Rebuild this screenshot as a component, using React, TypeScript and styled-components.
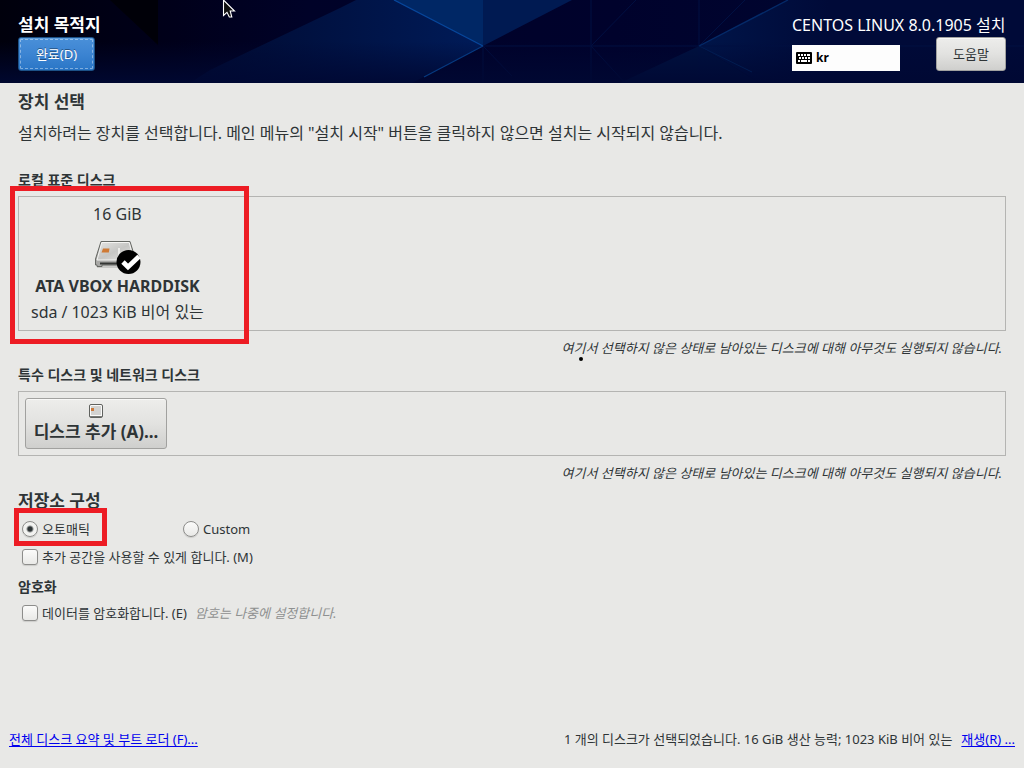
import React from "react";
import styled, { createGlobalStyle, css } from "styled-components";

const GlobalStyle = createGlobalStyle`
  *, *::before, *::after { box-sizing: border-box; }
  body {
    margin: 0;
    background: #e8e8e6;
    color: #2e3436;
    font-family: "Noto Sans", "Noto Sans CJK KR", sans-serif;
    font-size: 13px;
    line-height: 20px;
  }
  button, input { font: inherit; color: inherit; }
  h1, h2, h3, p { margin: 0; }
`;

const Page = styled.div`
  min-height: 100vh;
  display: flex;
  flex-direction: column;
`;

const Header = styled.header`
  position: relative;
  height: 83px;
  padding: 13px 18px 12px;
  display: flex;
  justify-content: space-between;
  background: #000833;
  color: #fff;
`;

const Backdrop = styled.svg`
  position: absolute;
  inset: 0;
  width: 100%;
  height: 100%;
`;

const Pointer = styled.svg`
  position: absolute;
  left: 222px;
  top: 0;
  width: 14px;
  height: 19px;
`;

const HeaderSide = styled.div`
  position: relative;
  display: flex;
  flex-direction: column;
  align-items: flex-start;
`;

const Title = styled.h1`
  font-size: 17px;
  line-height: 24px;
  font-weight: 700;
`;

const Product = styled.div`
  font-size: 16px;
  line-height: 24px;
  white-space: nowrap;
`;

const ToolRow = styled.div`
  display: flex;
  align-items: flex-end;
  justify-content: space-between;
  width: 214px;
`;

const buttonBase = css`
  border: 1px solid #a1a19f;
  border-radius: 3px;
  background: linear-gradient(#ededeb, #e2e2e0 50%, #cfcfcd);
  box-shadow: inset 0 1px #f8f8f7;
  color: #2e3436;
  padding: 0;
`;

const HelpButton = styled.button`
  ${buttonBase}
  width: 70px;
  height: 34px;
`;

const DoneButton = styled.button`
  ${buttonBase}
  width: 77px;
  height: 34px;
  border-color: #1c5187;
  background: linear-gradient(#4a90d9, #3c84d2 50%, #2a76c6);
  box-shadow: inset 0 1px #5f9ddd;
  color: #fff;
  text-shadow: 0 -1px rgba(0, 0, 0, 0.4);
  outline: 1px dashed rgba(255, 255, 255, 0.4);
  outline-offset: -3px;
`;

const KeyboardButton = styled.button`
  display: flex;
  align-items: center;
  gap: 4px;
  width: 108px;
  height: 26px;
  padding: 0 4px;
  border: 0;
  background: #fdfdfd;
  color: #000;
  font-size: 12px;
  font-weight: 700;
`;

const Main = styled.main`
  flex: 1;
  padding: 7px 18px 0;
`;

const SectionTitle = styled.h2`
  font-size: 17px;
  line-height: 24px;
  font-weight: 700;
`;

const Lead = styled.p`
  margin: 7px 0 25px;
  font-size: 16px;
  line-height: 24px;
`;

const GroupTitle = styled.h3`
  margin-bottom: 6px;
  font-size: 14px;
  font-weight: 700;
`;

const DiskBox = styled.div<{ $height: number }>`
  position: relative;
  min-height: ${(p) => p.$height}px;
  padding: 6px;
  border: 1px solid #b4b4b2;
`;

const Note = styled.p<{ $after: number }>`
  margin: 7px 4px ${(p) => p.$after}px 0;
  text-align: right;
  font-style: italic;
`;

const DiskTile = styled.button`
  display: flex;
  flex-direction: column;
  align-items: center;
  padding: 0 6px;
  border: 0;
  background: none;
  font-size: 16px;
  line-height: 22px;
  white-space: nowrap;
`;

const DriveIcon = styled.svg`
  width: 50px;
  height: 40px;
  margin-top: 10px;
`;

const DiskName = styled.strong`
  line-height: 22px;
  margin-bottom: 4px;
`;

const DiskDetail = styled.span`
  display: flex;
  gap: 4px;
`;

const AddButton = styled.button`
  ${buttonBase}
  display: flex;
  flex-direction: column;
  align-items: center;
  gap: 2px;
  width: 142px;
  height: 51px;
  padding-top: 5px;
  font-size: 17px;
  line-height: 24px;
  font-weight: 700;
  white-space: nowrap;
`;

const Highlight = styled.span<{ $x: number; $y: number; $w: number; $h: number }>`
  position: absolute;
  left: ${(p) => p.$x}px;
  top: ${(p) => p.$y}px;
  width: ${(p) => p.$w}px;
  height: ${(p) => p.$h}px;
  border: 5px solid #ed1c24;
  pointer-events: none;
`;

const Speck = styled.span`
  position: absolute;
  left: 560px;
  top: 160px;
  width: 4px;
  height: 4px;
  border-radius: 2px;
  background: #000;
`;

const OptionRow = styled.div`
  position: relative;
  display: grid;
  grid-template-columns: 161px 1fr;
  margin: 6px 0 8px 4px;
`;

const Option = styled.label`
  display: flex;
  align-items: center;
  gap: 4px;
`;

const CheckRow = styled.div<{ $after: number }>`
  display: flex;
  gap: 8px;
  margin: 0 0 ${(p) => p.$after}px 4px;
`;

const Mark = styled.input`
  appearance: none;
  width: 16px;
  height: 16px;
  margin: 0;
  border: 1px solid #8d8d8b;
  background: linear-gradient(#fbfbfa, #e9e9e7);
  box-shadow: 0 1px 1px rgba(0, 0, 0, 0.12);

  &[type="checkbox"] { border-radius: 3px; }
  &[type="radio"] { border-radius: 8px; }
  &[type="radio"]:checked {
    background: radial-gradient(circle, #2e3436 0 2px, #f2f2f0 4px);
  }
`;

const Hint = styled.span`
  color: #8e9090;
  font-style: italic;
`;

const Footer = styled.footer`
  display: flex;
  justify-content: space-between;
  padding: 0 9px 19px;
`;

const Summary = styled.div`
  display: flex;
  gap: 9px;
`;

const Link = styled.a`
  color: #0000ee;
  text-decoration: underline;
  text-underline-offset: 2px;
`;

function HeaderArt() {
  return (
    <Backdrop viewBox="0 0 1024 83" preserveAspectRatio="none" aria-hidden="true">
      <defs>
        <linearGradient id="base" x1="0" x2="1" y1="0" y2="0">
          <stop offset="0" stopColor="#00000c" />
          <stop offset="0.17" stopColor="#00001a" />
          <stop offset="0.3" stopColor="#000228" />
          <stop offset="0.6" stopColor="#00022c" />
          <stop offset="1" stopColor="#000833" />
        </linearGradient>
        <linearGradient id="beam" x1="0" x2="1" y1="0" y2="0">
          <stop offset="0" stopColor="#000a30" />
          <stop offset="1" stopColor="#001b58" />
        </linearGradient>
        <linearGradient id="right" x1="0" x2="1" y1="0" y2="0">
          <stop offset="0" stopColor="#001549" />
          <stop offset="0.4" stopColor="#000a38" />
          <stop offset="1" stopColor="#000a38" />
        </linearGradient>
        <linearGradient id="fade" x1="0" x2="0" y1="0" y2="1">
          <stop offset="0.5" stopColor="#000833" stopOpacity="0" />
          <stop offset="1" stopColor="#000833" stopOpacity="0.9" />
        </linearGradient>
      </defs>
      <rect width="1024" height="83" fill="url(#base)" />
      <path d="M0 0H110L158 45V0Z" fill="#000008" />
      <path d="M210 70L340 8L356 0H394L483 46L412 83H190Z" fill="url(#beam)" />
      <path d="M394 0H483V46Z" fill="#002765" />
      <path d="M483 0H572L483 46Z" fill="#001a52" />
      <path d="M788 0H1024V83H760L699 46Z" fill="url(#right)" />
      <path d="M699 46L760 83H620Z" fill="#001240" />
      <path d="M483 46H1024M591 0V83M591 46L636 0M591 46L625 83M699 0V83M699 46L745 0M483 46L512 76M483 46V83" stroke="#001042" fill="none" />
      <rect width="1024" height="83" fill="url(#fade)" />
      <path d="M394 0L483 46" stroke="#07479c" strokeWidth="1.3" />
      <path d="M483 46L424 77" stroke="#063a80" strokeWidth="1.2" />
      <path d="M788 0L699 46" stroke="#042a68" strokeWidth="1.4" />
      <path d="M699 46L752 72" stroke="#021c50" />
    </Backdrop>
  );
}

function KeyboardIcon() {
  return (
    <svg width="16" height="12" viewBox="0 0 16 12" aria-hidden="true">
      <rect width="16" height="12" rx="1" fill="#000" />
      <path d="M2 3h2M5 3h2M8 3h2M11 3h3M3 6h2M6 6h2M9 6h2M12 6h2M2 9h2M5 9h6M12 9h2" stroke="#fff" strokeWidth="2" />
    </svg>
  );
}

function Drive() {
  return (
    <DriveIcon viewBox="0 0 50 40" aria-hidden="true">
      <defs>
        <linearGradient id="lid" x1="0" y1="0" x2="1" y2="1">
          <stop offset="0" stopColor="#e4e4e2" />
          <stop offset="0.5" stopColor="#c6c6c4" />
          <stop offset="1" stopColor="#e6e6e4" />
        </linearGradient>
      </defs>
      <path d="M5 30H44V33H5Z" fill="#b4b4b2" opacity="0.6" />
      <path d="M9 6.500H38L43.500 24V30H10V31.500H5V30H3.500V24Z" fill="#a8a8a6" stroke="#666864" />
      <path d="M9.800 7.500H37.200L42 25H5Z" fill="url(#lid)" stroke="#f5f5f3" />
      <path d="M8 28.500H30" stroke="#343634" strokeWidth="2" />
      <path d="M27 13V20" stroke="#f7f7f5" strokeWidth="1.500" />
      <path d="M11 13.500H17.500L16.800 17.500H9.500Z" fill="#cf7a35" />
      <circle cx="36.500" cy="27" r="12" fill="#000" />
      <path d="M31 27L36 32L47 21.500" fill="none" stroke="#fff" strokeWidth="4.800" />
    </DriveIcon>
  );
}

function SmallDrive() {
  return (
    <svg width="14" height="14" viewBox="0 0 14 14" aria-hidden="true">
      <rect x="0.500" y="0.500" width="13" height="13" rx="1.500" fill="#fafaf9" stroke="#60625f" />
      <rect x="2" y="2" width="10" height="9" fill="#d3d3d1" />
      <rect x="2" y="4" width="3" height="3" fill="#cc7a3c" />
      <path d="M1 12.500H13" stroke="#777975" />
    </svg>
  );
}

const NOTE = "여기서 선택하지 않은 상태로 남아있는 디스크에 대해 아무것도 실행되지 않습니다.";

export default function App() {
  return (
    <Page>
      <GlobalStyle />
      <Header>
        <HeaderArt />
        <HeaderSide>
          <Title>설치 목적지</Title>
          <DoneButton type="button">완료(D)</DoneButton>
        </HeaderSide>
        <HeaderSide>
          <Product>CENTOS LINUX 8.0.1905 설치</Product>
          <ToolRow>
            <KeyboardButton type="button">
              <KeyboardIcon />
              kr
            </KeyboardButton>
            <HelpButton type="button">도움말</HelpButton>
          </ToolRow>
        </HeaderSide>
        <Pointer viewBox="0 0 14 19" aria-hidden="true">
          <path d="M1.500 0V15.500L5 12.300L7.300 17H9.800L8.200 11H12.500Z" fill="#111" stroke="#fff" strokeWidth="1.100" />
        </Pointer>
      </Header>

      <Main>
        <SectionTitle>장치 선택</SectionTitle>
        <Lead>설치하려는 장치를 선택합니다. 메인 메뉴의 "설치 시작" 버튼을 클릭하지 않으면 설치는 시작되지 않습니다.</Lead>

        <GroupTitle>로컬 표준 디스크</GroupTitle>
        <DiskBox $height={135}>
          <DiskTile type="button" aria-pressed="true">
            <span>16 GiB</span>
            <Drive />
            <DiskName>ATA VBOX HARDDISK</DiskName>
            <DiskDetail>
              <span>sda</span>
              <span>/</span>
              <span>1023 KiB 비어 있는</span>
            </DiskDetail>
          </DiskTile>
          <Highlight $x={-9} $y={-11} $w={239} $h={158} />
          <Speck />
        </DiskBox>
        <Note $after={7}>{NOTE}</Note>

        <GroupTitle>특수 디스크 및 네트워크 디스크</GroupTitle>
        <DiskBox $height={65}>
          <AddButton type="button">
            <SmallDrive />
            디스크 추가 (A)...
          </AddButton>
        </DiskBox>
        <Note $after={6}>{NOTE}</Note>

        <SectionTitle>저장소 구성</SectionTitle>
        <OptionRow role="radiogroup" aria-label="저장소 구성">
          <Option>
            <Mark type="radio" name="storage" defaultChecked />
            오토매틱
          </Option>
          <Option>
            <Mark type="radio" name="storage" />
            Custom
          </Option>
          <Highlight $x={-8} $y={-11} $w={93} $h={38} />
        </OptionRow>
        <CheckRow $after={10}>
          <Option>
            <Mark type="checkbox" />
            추가 공간을 사용할 수 있게 합니다. (M)
          </Option>
        </CheckRow>
        <GroupTitle>암호화</GroupTitle>
        <CheckRow $after={20}>
          <Option>
            <Mark type="checkbox" />
            데이터를 암호화합니다. (E)
          </Option>
          <Hint>암호는 나중에 설정합니다.</Hint>
        </CheckRow>
      </Main>

      <Footer>
        <Link href="#summary">전체 디스크 요약 및 부트 로더 (F)...</Link>
        <Summary>
          <span>1 개의 디스크가 선택되었습니다. 16 GiB 생산 능력; 1023 KiB 비어 있는</span>
          <Link href="#refresh">재생(R) ...</Link>
        </Summary>
      </Footer>
    </Page>
  );
}
